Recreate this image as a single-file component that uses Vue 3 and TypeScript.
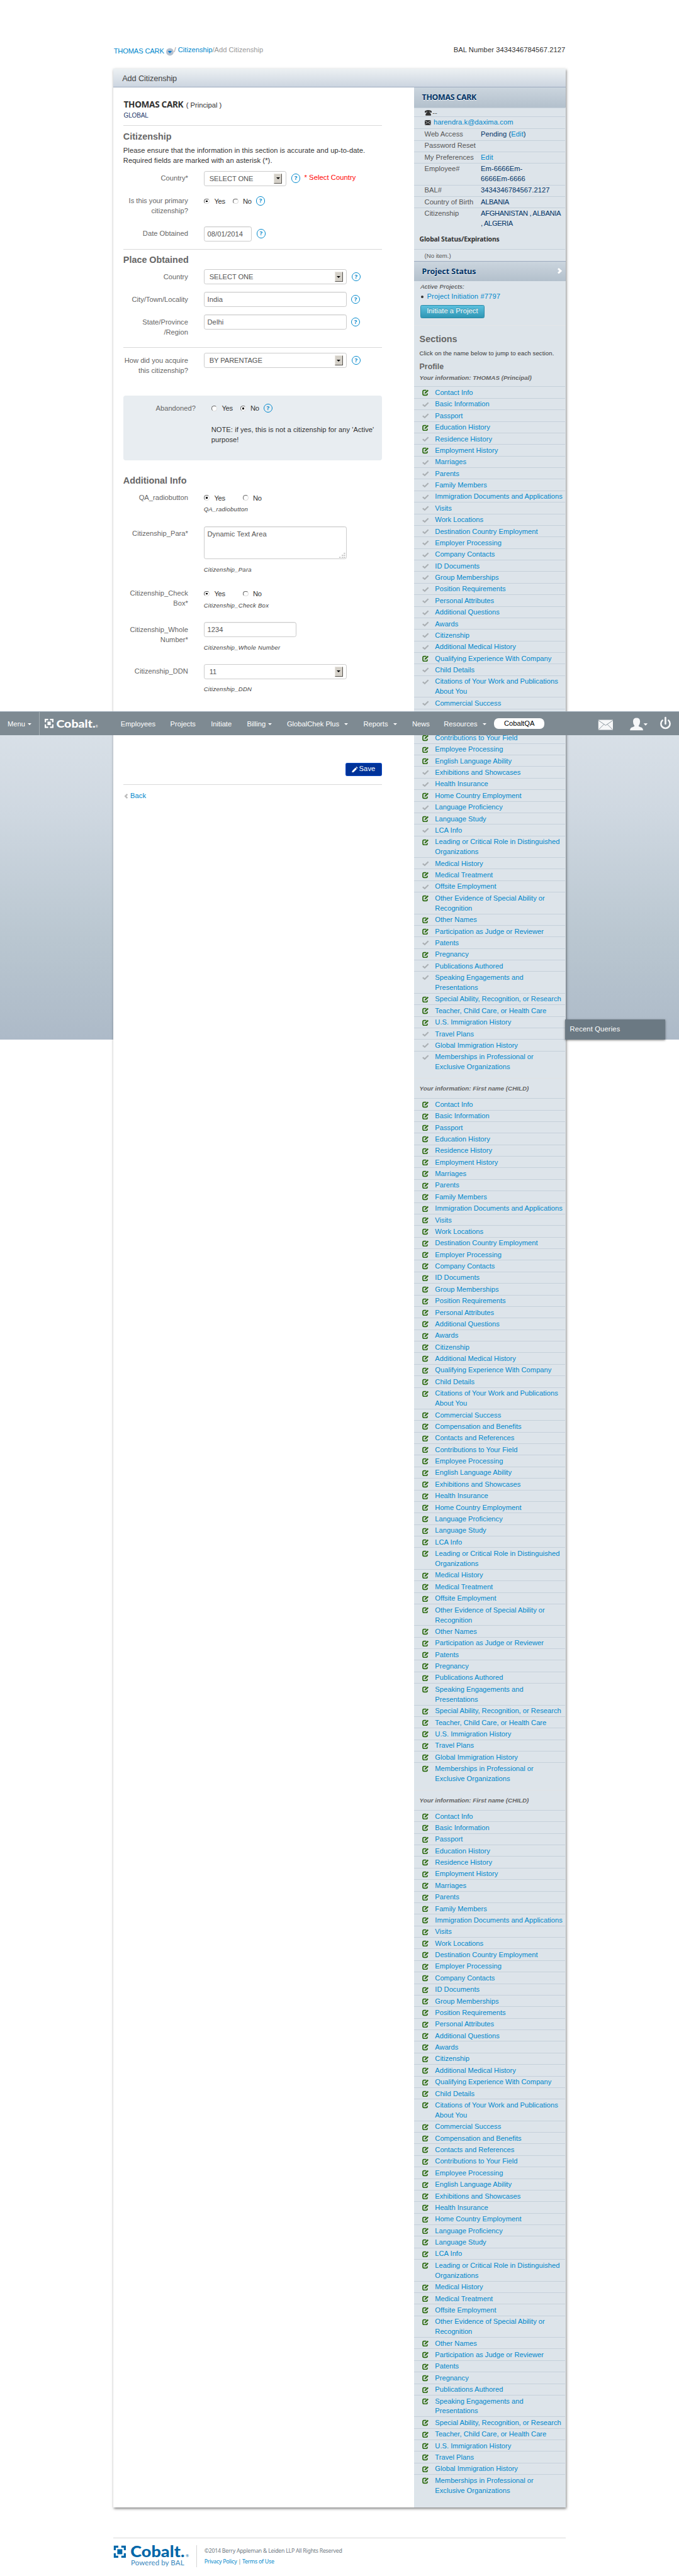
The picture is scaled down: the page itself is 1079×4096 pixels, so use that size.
<script setup lang="ts">
interface Row { label: string; tall?: boolean }

const raw: string[] = [
  'Contact Info', 'Basic Information', 'Passport', 'Education History', 'Residence History', 'Employment History',
  'Marriages', 'Parents', 'Family Members', 'Immigration Documents and Applications', 'Visits', 'Work Locations',
  'Destination Country Employment', 'Employer Processing', 'Company Contacts', 'ID Documents', 'Group Memberships',
  'Position Requirements', 'Personal Attributes', 'Additional Questions', 'Awards', 'Citizenship',
  'Additional Medical History', 'Qualifying Experience With Company', 'Child Details',
  'Citations of Your Work and Publications|About You', 'Commercial Success', 'Compensation and Benefits',
  'Contacts and References', 'Contributions to Your Field', 'Employee Processing', 'English Language Ability',
  'Exhibitions and Showcases', 'Health Insurance', 'Home Country Employment', 'Language Proficiency',
  'Language Study', 'LCA Info', 'Leading or Critical Role in Distinguished|Organizations', 'Medical History',
  'Medical Treatment', 'Offsite Employment', 'Other Evidence of Special Ability or|Recognition', 'Other Names',
  'Participation as Judge or Reviewer', 'Patents', 'Pregnancy', 'Publications Authored',
  'Speaking Engagements and|Presentations', 'Special Ability, Recognition, or Research',
  'Teacher, Child Care, or Health Care', 'U.S. Immigration History', 'Travel Plans', 'Global Immigration History',
  'Memberships in Professional or|Exclusive Organizations',
]
const rows: Row[] = raw.map((s) => ({ label: s.replace('|', '\n'), tall: s.includes('|') }))

// Rows the principal still has to edit; every other row is checked off.
const openRows = new Set<string>([
  'Contact Info', 'Education History', 'Employment History', 'Qualifying Experience With Company',
  'Contributions to Your Field', 'Employee Processing', 'English Language Ability', 'Home Country Employment',
  'Language Study', 'Leading or Critical Role in Distinguished\nOrganizations', 'Medical Treatment',
  'Other Evidence of Special Ability or\nRecognition', 'Other Names', 'Participation as Judge or Reviewer',
  'Pregnancy', 'Special Ability, Recognition, or Research', 'Teacher, Child Care, or Health Care',
  'U.S. Immigration History',
])
const people = [
  { title: 'Your information: THOMAS (Principal)', all: false },
  { title: 'Your information: First name (CHILD)', all: true },
  { title: 'Your information: First name (CHILD)', all: true },
]
const facts: { k: string; v: string; h: number; edit?: boolean; link?: boolean; tight?: boolean }[] = [
  { k: 'Web Access', v: 'Pending (', h: 23, edit: true },
  { k: 'Password Reset', v: '', h: 23 },
  { k: 'My Preferences', v: 'Edit', h: 23, link: true },
  { k: 'Employee#', v: 'Em-6666Em-\n6666Em-6666', h: 43 },
  { k: 'BAL#', v: '3434346784567.2127', h: 23 },
  { k: 'Country of Birth', v: 'ALBANIA', h: 23, tight: true },
  { k: 'Citizenship', v: 'AFGHANISTAN , ALBANIA\n, ALGERIA', h: 43, tight: true },
]
const menu: { t: string; w: number; c: number }[] = [
  { t: 'Employees', w: 98.5, c: 0 }, { t: 'Projects', w: 81, c: 0 }, { t: 'Initiate', w: 71.5, c: 0 },
  { t: 'Billing', w: 79.5, c: 42 }, { t: 'GlobalChek Plus', w: 152, c: 114 }, { t: 'Reports', w: 97, c: 59 },
  { t: 'News', w: 63, c: 0 }, { t: 'Resources', w: 100, c: 77 },
]
</script>

<template>
  <div class="page">
    <div class="backdrop"></div>

    <header class="crumbs">
      <div class="crumb-left">
        <a class="who">THOMAS CARK</a>
        <svg class="drop" viewBox="0 0 16 16"><circle cx="8" cy="8" r="8" fill="#b5c1d0" /><path d="M3.5 6h9L8 11z" fill="#0a7ad0" /></svg>
        <span class="trail"><i>/</i> <a>Citizenship</a>/Add Citizenship</span>
      </div>
      <div class="bal">BAL Number 3434346784567.2127</div>
    </header>

    <section class="panel">
      <div class="panel-head">Add Citizenship</div>
      <div class="cols">
        <main class="form">
          <div class="person"><b>THOMAS CARK</b><span>( Principal )</span></div>
          <div class="global">GLOBAL</div>
          <hr style="margin-top: 10px" />
          <h2>Citizenship</h2>
          <p class="intro">Please ensure that the information in this section is accurate and up-to-date.<br />Required fields are marked with an asterisk (*).</p>

          <div class="row" style="height: 45px; margin-top: 10px">
            <label>Country*</label>
            <div class="field">
              <div class="box select" style="width: 164px">SELECT ONE<span class="btn"><i></i></span></div>
              <span class="help" style="margin-left: 10px">?</span><span class="err">* Select Country</span>
            </div>
          </div>
          <div class="row" style="height: 65px">
            <label>Is this your primary<br />citizenship?</label>
            <div class="field">
              <span class="radio on"></span><span class="opt" style="width: 36px">Yes</span>
              <span class="radio"></span><span class="opt" style="width: 26px">No</span><span class="help">?</span>
            </div>
          </div>
          <div class="row" style="height: 45px">
            <label>Date Obtained</label>
            <div class="field"><div class="box" style="width: 96px">08/01/2014</div><span class="help" style="margin-left: 9px">?</span></div>
          </div>
          <hr />
          <h2>Place Obtained</h2>
          <div class="row" style="height: 45px; margin-top: 5px">
            <label>Country</label>
            <div class="field"><div class="box select" style="width: 285px">SELECT ONE<span class="btn"><i></i></span></div><span class="help" style="margin-left: 9px">?</span></div>
          </div>
          <div class="row" style="height: 45px">
            <label>City/Town/Locality</label>
            <div class="field"><div class="box" style="width: 284px">India</div><span class="help" style="margin-left: 9px">?</span></div>
          </div>
          <div class="row" style="height: 65px">
            <label>State/Province<br />/Region</label>
            <div class="field"><div class="box" style="width: 284px">Delhi</div><span class="help" style="margin-left: 9px">?</span></div>
          </div>
          <hr />
          <div class="row" style="height: 85px; margin-top: 10px">
            <label>How did you acquire<br />this citizenship?</label>
            <div class="field"><div class="box select" style="width: 285px">BY PARENTAGE<span class="btn"><i></i></span></div><span class="help" style="margin-left: 9px">?</span></div>
          </div>

          <div class="abandoned">
            <div class="row">
              <label>Abandoned?</label>
              <div class="field">
                <span class="radio"></span><span class="opt" style="width: 36px">Yes</span>
                <span class="radio on"></span><span class="opt" style="width: 26px">No</span><span class="help">?</span>
              </div>
            </div>
            <p>NOTE: if yes, this is not a citizenship for any 'Active'<br />purpose!</p>
          </div>

          <h2 class="extra">Additional Info</h2>
          <div class="row" style="height: 72px; margin-top: 5px">
            <label>QA_radiobutton</label>
            <div class="field">
              <span class="radio on"></span><span class="opt" style="width: 56px">Yes</span><span class="radio"></span><span class="opt">No</span>
              <em style="margin-top: 2px">QA_radiobutton</em>
            </div>
          </div>
          <div class="row" style="height: 119px">
            <label>Citizenship_Para*</label>
            <div class="field">
              <div class="box area">Dynamic Text Area<svg viewBox="0 0 12 12"><path d="M9 0h3v2H9zM5 4h3v2H5zM9 4h3v2H9zM0 8h3v2H0zM5 8h3v2H5zM9 8h3v2H9z" fill="#bbb" /></svg></div>
              <em>Citizenship_Para</em>
            </div>
          </div>
          <div class="row" style="height: 72px">
            <label>Citizenship_Check<br />Box*</label>
            <div class="field">
              <span class="radio on"></span><span class="opt" style="width: 56px">Yes</span><span class="radio"></span><span class="opt">No</span>
              <em style="margin-top: 2px">Citizenship_Check Box</em>
            </div>
          </div>
          <div class="row" style="height: 83px">
            <label>Citizenship_Whole<br />Number*</label>
            <div class="field"><div class="box" style="width: 184px">1234</div><em>Citizenship_Whole Number</em></div>
          </div>
          <div class="row" style="height: 197px">
            <label>Citizenship_DDN</label>
            <div class="field"><div class="box select" style="width: 285px">11<span class="btn"><i></i></span></div><em>Citizenship_DDN</em></div>
          </div>
          <div class="actions">
            <button class="save"><svg viewBox="0 0 12 12"><path d="M0 12l1-3.6L7.4 2l2.6 2.6L3.6 11zM8.2 1.2L9.4 0 12 2.6 10.8 3.8z" fill="#fff" /></svg>Save</button>
          </div>
          <hr style="margin-top: 17px" />
          <a class="back"><svg viewBox="0 0 9 12"><path d="M6.5 0L9 2.5 5.5 6 9 9.5 6.5 12 .5 6z" fill="#bbb" /></svg>Back</a>
        </main>

        <aside class="side">
          <div class="side-head">THOMAS CARK</div>
          <div class="fact" style="height: 18.5px"><svg class="tel" viewBox="0 0 14 11"><path d="M0 3.6C0-1.2 14-1.2 14 3.6V5h-3.4V3.2H9.4v1l3 4V11H1.6V8.2l3-4v-1H3.4V5H0z" fill="#333" /></svg><span>--</span></div>
          <div class="fact" style="height: 23.5px"><svg class="env" viewBox="0 0 12 10"><path d="M0 0h12v10H0z" fill="#333" /><path d="M0 .5l6 5 6-5M0 9.5l4.2-4M12 9.5l-4.2-4" stroke="#dde4ea" fill="none" /></svg><a>harendra.k@daxima.com</a></div>
          <div v-for="f in facts" :key="f.k" class="fact" :style="{ height: f.h + 'px' }">
            <span class="k">{{ f.k }}</span>
            <span class="v" :class="{ tight: f.tight }"><a v-if="f.link">{{ f.v }}</a><template v-else>{{ f.v }}</template><template v-if="f.edit"><a>Edit</a>)</template></span>
          </div>
          <div class="status">Global Status/Expirations</div>
          <div class="fact none">(No item.)</div>
          <div class="side-head second">Project Status<svg viewBox="0 0 9 12"><path d="M2.5 0L9 6l-6.5 6L0 9.5 3.5 6 0 2.5z" fill="#fff" /></svg></div>
          <div class="projects">
            <em>Active Projects:</em>
            <div class="proj"><i></i><a>Project Initiation #7797</a></div>
            <button class="initiate">Initiate a Project</button>
          </div>
          <div class="sections">
            <h2>Sections</h2>
            <p>Click on the name below to jump to each section.</p>
            <h3>Profile</h3>
          </div>
          <template v-for="(p, n) in people" :key="n">
            <div class="info" :class="{ first: n === 0 }">{{ p.title }}</div>
            <ul>
              <li v-for="r in rows" :key="r.label" :class="{ tall: r.tall }">
                <svg v-if="p.all || openRows.has(r.label)" viewBox="0 0 13 13"><path d="M8 2H3.5Q1.3 2 1.3 4.2v5.3q0 2.2 2.2 2.2h4.3Q10 11.7 10 9.5V8.2" fill="none" stroke="#2d6b12" stroke-width="2.2" /><path d="M4.5 9l.4-2.8L10.600.9l2 1.900L7 8.300z" fill="#2d6b12" /></svg>
                <svg v-else viewBox="0 0 13 13"><path d="M0 7.5l2-2L4.8 8l6.4-6L13 3.8 5 11.5z" fill="#aaafb3" /></svg>
                <a>{{ r.label }}</a>
              </li>
            </ul>
          </template>
        </aside>
      </div>
    </section>

    <footer>
      <svg class="flogo" viewBox="0 0 165 48">
        <g fill="none" stroke="#0067a9" stroke-width="4"><path d="M10 3H3v7M16 3h7v7M3 16v7h7M23 16v7h-7" /></g><path d="M8 8h10v10H8z" fill="#0067a9" />
        <text x="34" y="24" font-size="30" font-weight="900" textLength="108" lengthAdjust="spacingAndGlyphs" fill="#0067a9">Cobalt.</text>
        <text x="144" y="24" font-size="8" fill="#0067a9">®</text>
        <text x="35" y="40" font-size="14.5" textLength="106" lengthAdjust="spacingAndGlyphs" fill="#3a87bd">Powered by BAL</text>
      </svg>
      <div class="legal"><div>©2014 Berry Appleman &amp; Leiden LLP All Rights Reserved</div><a>Privacy Policy <i>|</i> Terms of Use</a></div>
    </footer>

    <nav class="bar">
      <span class="m">Menu<i class="caret" style="left: 55px"></i></span>
      <svg class="nlogo" viewBox="0 0 110 24">
        <g fill="none" stroke="#fff" stroke-width="2.8"><path d="M7 1.4H1.4V7M10.5 1.4h5.600V7M1.4 11v5.600H7M16.1 11v5.600h-5.600" /></g><path d="M5.5 5.5h6.500v7H5.5z" fill="#fff" />
        <text x="23" y="17" font-size="22" font-weight="900" textLength="78" lengthAdjust="spacingAndGlyphs" fill="#fff">Cobalt.</text>
        <text x="101" y="17" font-size="6" fill="#fff">®</text>
      </svg>
      <span v-for="i in menu" :key="i.t" class="item" :style="{ width: i.w + 'px' }">{{ i.t }}<i v-if="i.c" class="caret" :style="{ left: i.c + 'px' }"></i></span>
      <span class="pill">CobaltQA</span>
      <svg class="tools" viewBox="0 0 150 30">
        <path d="M1 7h29v20H1z" fill="#f6f7f8" /><path d="M1 8l14.5 10L30 8M1.5 26.500L12 16M29.500 26.500L19 16" stroke="#7e8a92" stroke-width="1.1" fill="none" />
        <path d="M64 28q0-5.500 5-6.500 4-1 4-2.500-3-3.500-3-8.500Q70 3 77 3t7 7.500q0 5-3 8.500 0 1.500 4 2.500 5 1 5 6.500z" fill="#f6f7f8" />
        <path d="M91 14h8l-4 4.500z" fill="#fff" />
        <path d="M128.500 8a9 9 0 1 0 12 0" fill="none" stroke="#f6f7f8" stroke-width="3.2" stroke-linecap="round" /><path d="M134.500 2.500V15" stroke="#f6f7f8" stroke-width="3.4" stroke-linecap="round" />
      </svg>
    </nav>
    <div class="recent">Recent Queries</div>
  </div>
</template>

<style>
body { margin: 0; background: #fff; overflow: hidden; }
</style>
<style scoped>
* { box-sizing: border-box; }
.page { position: relative; width: 1350px; height: 5124.7px; zoom: 0.79926; overflow: hidden; background: #fff; font: 14px/20px "Liberation Sans", Arial, sans-serif; color: #333; display: flex; flex-direction: column; align-items: center; letter-spacing: 0.1px; }
a { color: #0088cc; }
button { font: inherit; letter-spacing: inherit; padding: 0; }
.backdrop { position: absolute; left: 0; right: 0; top: 1415px; height: 653px; background: linear-gradient(#dbe2e9, #cfd8e1 30%, #b9c6d0 70%, #adbac8); }
.crumbs { width: 900px; height: 137px; padding-top: 90px; display: flex; justify-content: space-between; flex: none; }
.crumb-left { display: flex; color: #999; }
.who { padding-top: 2px; width: 105px; letter-spacing: -0.2px; padding-left: 1px; }
.drop { width: 15px; height: 16px; margin-top: 5px; }
.trail { padding-left: 1px; white-space: nowrap; letter-spacing: 0; }
.trail i { font-style: normal; }
.bal { padding-right: 1px; }
.panel { position: relative; width: 900px; height: 4852px; flex: none; background: #fff; box-shadow: 1px 2px 5px rgba(0, 0, 0, 0.5); }
.panel-head { height: 37px; border-bottom: 1px solid #9dabbf; background: linear-gradient(#edf1f3, #ccd5e0); font-size: 16px; line-height: 39px; padding-left: 18px; color: #444; letter-spacing: -0.15px; }
.cols { display: flex; height: 4815px; }
.form { width: 598px; padding: 24px 64px 0 20px; }
.person { height: 21px; display: flex; align-items: baseline; }
.person b { font: bold 17px/21px "Noto Sans", sans-serif; letter-spacing: -0.4px; width: 125px; white-space: nowrap; padding-left: 1px; }
.person span { line-height: 21px; letter-spacing: 0; }
.global { padding-left: 1px; height: 20px; font-size: 12.5px; line-height: 22px; color: #24386b; letter-spacing: -0.2px; }
hr { border: 0; height: 1px; margin: 0; background: #d9d9d9; }
h2 { margin: 0; font: bold 18px/43px "Liberation Sans", Arial, sans-serif; letter-spacing: 0; color: #666; height: 35px; }
.intro { margin: 5px 0 0; height: 40px; white-space: nowrap; letter-spacing: 0.12px; }
.row { display: flex; }
.row label { width: 129px; text-align: right; color: #666; padding-top: 6px; white-space: nowrap; flex: none; letter-spacing: 0; }
.field { margin-left: 31px; display: flex; flex-wrap: wrap; align-items: flex-start; align-content: flex-start; width: 354px; }
.box { position: relative; height: 30px; border: 1px solid #ccc; border-radius: 4px; box-shadow: inset 0 1px 1px rgba(0, 0, 0, 0.075); padding-left: 6px; line-height: 29px; color: #555; background: #fff; }
.select { padding-left: 10px; line-height: 28px; box-shadow: none; letter-spacing: -0.1px; }
.btn { position: absolute; right: 7px; top: 4px; width: 16px; height: 20px; background: #d4d0c8; border: 1px solid #e8e5df; border-right: 2px solid #55524d; border-bottom: 2px solid #55524d; display: flex; align-items: center; justify-content: center; }
.btn i { border: 4px solid transparent; border-top-color: #000; border-bottom: 0; }
.area { width: 284px; height: 66px; line-height: 29px; }
.area svg { position: absolute; right: 1px; bottom: 0; width: 12px; height: 12px; }
.help { width: 18px; height: 18px; border-radius: 50%; border: 1.5px solid #0088cc; color: #0088cc; font: bold 12px/16px "Noto Sans", sans-serif; text-align: center; margin-top: 6px; letter-spacing: 0; }
.err { color: #f00; margin: 4px 0 0 8px; }
.radio { width: 11px; height: 11px; margin: 10px 9px 0 1px; border-radius: 50%; border: 1.5px solid #666; border-right-color: #ddd; border-bottom-color: #ddd; background: #fff; }
.radio.on { background: radial-gradient(#000 0 28%, #fff 38%); }
.opt { padding-top: 7px; letter-spacing: -0.3px; }
em { width: 100%; margin-top: 11px; font-size: 12px; color: #444; letter-spacing: 0.3px; }
.abandoned { height: 129px; background: #e8edf1; border-radius: 5px; padding: 10px 0 0 15px; }
.abandoned p { margin: 14px 0 0 160px; white-space: nowrap; letter-spacing: 0.05px; }
.abandoned .row { height: 35px; }
.extra { margin-top: 19px; }
.actions { display: flex; justify-content: flex-end; }
.save { width: 72px; height: 26px; background: #039; border: 1px solid #0a48c4; border-radius: 3px; color: #fff; display: flex; align-items: center; justify-content: center; gap: 2px; }
.save svg { width: 12px; height: 12px; }
.back { display: flex; align-items: center; gap: 4px; margin: 12px 0 0 2px; }
.back svg { width: 8px; height: 10px; }
.side { width: 302px; background: #dde4ea; }
.side-head { height: 39.5px; background: linear-gradient(#cbd5de, #b3c0cc); color: #036; font: bold 15.5px/40px "Noto Sans", sans-serif; padding-left: 16px; text-shadow: 0 1px 0 #fff; letter-spacing: -0.35px; }
.fact { border-top: 1px solid #c5d0da; padding: 1px 0 0 21px; margin-right: 1px; display: flex; letter-spacing: 0; white-space: pre; color: #555; }
.fact .k { width: 112px; flex: none; }
.fact .v { color: #036; letter-spacing: 0.05px; }
.fact .v.tight { letter-spacing: -0.45px; }
.tel { width: 14px; height: 11px; margin: 3px 2px 0 0; }
.env { width: 12px; height: 10px; margin: 5px 5px 0 1px; }
.fact a { letter-spacing: 0.1px; }
.fact span { line-height: 20px; }
.status { height: 39.5px; padding-left: 11px; font: bold 13px/40px "Noto Sans", sans-serif; letter-spacing: -0.2px; }
.fact.none { height: 23.5px; font-size: 12px; padding-top: 2px; }
.side-head.second { border-top: 1px solid #9dabbf; height: 39.5px; position: relative; letter-spacing: 0; }
.second svg { position: absolute; right: 7px; top: 12px; width: 9px; height: 12px; }
.projects { height: 89px; border-bottom: 1px solid #e3e6e8; padding: 2px 0 0 13px; }
.projects em { display: block; margin: 0; color: #333; font-size: 12px; }
.proj { display: flex; align-items: center; gap: 7px; padding-left: 1px; letter-spacing: 0.15px; }
.proj i { width: 5px; height: 5px; background: #333; border-radius: 50%; }
.initiate { display: block; margin-top: 6px; width: 127px; height: 26px; border: 1px solid #2a8aa8; border-radius: 3px; background: linear-gradient(#5bc0de, #2f96b4); color: #fff; text-shadow: 0 -1px 0 rgba(0, 0, 0, 0.25); }
.sections { padding-left: 11px; height: 91px; }
.sections h2 { line-height: 55px; height: 45px; }
.sections p { margin: 0; font-size: 12px; line-height: 20px; letter-spacing: 0.15px; }
.sections h3 { margin: 0; font: bold 15.5px/35px "Liberation Sans", Arial, sans-serif; letter-spacing: 0; color: #666; }
.info { height: 40.5px; border-top: 1px solid #e0e3e5; font: italic bold 12.3px/41px "Liberation Sans", Arial, sans-serif; color: #666; padding-left: 11px; margin-top: 10.5px; letter-spacing: 0; }
.info.first { margin: 0; height: 30px; line-height: 24px; border: 0; }
ul { list-style: none; margin: 0; padding: 0; height: 1365px; }
li { height: 23px; border-top: 1px solid #c5d0da; margin-right: 1px; padding: 2px 0 0 17px; display: flex; white-space: pre; letter-spacing: 0; }
li.tall { height: 43px; }
li svg { width: 13px; height: 13px; margin: 3px 12px 0 0; flex: none; }
footer { width: 900px; margin-top: 60px; border-top: 1px solid #d9d9d9; height: 70px; display: flex; padding-top: 13px; }
.flogo { width: 165px; height: 48px; font-family: Lato, sans-serif; overflow: visible; }
.legal { border-left: 2px solid #d5d5d5; padding: 1px 0 0 15px; height: 44px; font: 11px/22px "Noto Sans", sans-serif; color: #707a82; letter-spacing: -0.33px; white-space: nowrap; }
.legal i { font-style: normal; color: #707a82; }
.bar { position: absolute; left: 0; top: 1415px; width: 1350px; height: 48px; background: #7e8a92; border-top: 1px solid #9aa9b6; color: #fff; display: flex; line-height: 48px; letter-spacing: 0; }
.m { position: relative; width: 79px; padding-left: 15px; border-right: 1px solid #a4adb3; }
.nlogo { width: 110px; height: 24px; margin: 14px 41px 0 10px; font-family: Lato, sans-serif; overflow: visible; }
.item { position: relative; white-space: nowrap; }
.caret { position: absolute; top: 22px; border: 4px solid transparent; border-top-color: #fff; border-bottom: 0; }
.pill { width: 100px; height: 22px; margin-top: 12px; border-radius: 9px; background: #fff; color: #000; line-height: 22px; text-align: center; }
.tools { width: 150px; height: 30px; margin: 9px 0 0 106px; }
.recent { position: absolute; left: 1123px; top: 2028px; width: 200px; height: 40px; background: #6b7983; color: #fff; line-height: 40px; padding-left: 10px; box-shadow: 0 1px 4px rgba(0, 0, 0, 0.5); letter-spacing: 0.2px; }
</style>
